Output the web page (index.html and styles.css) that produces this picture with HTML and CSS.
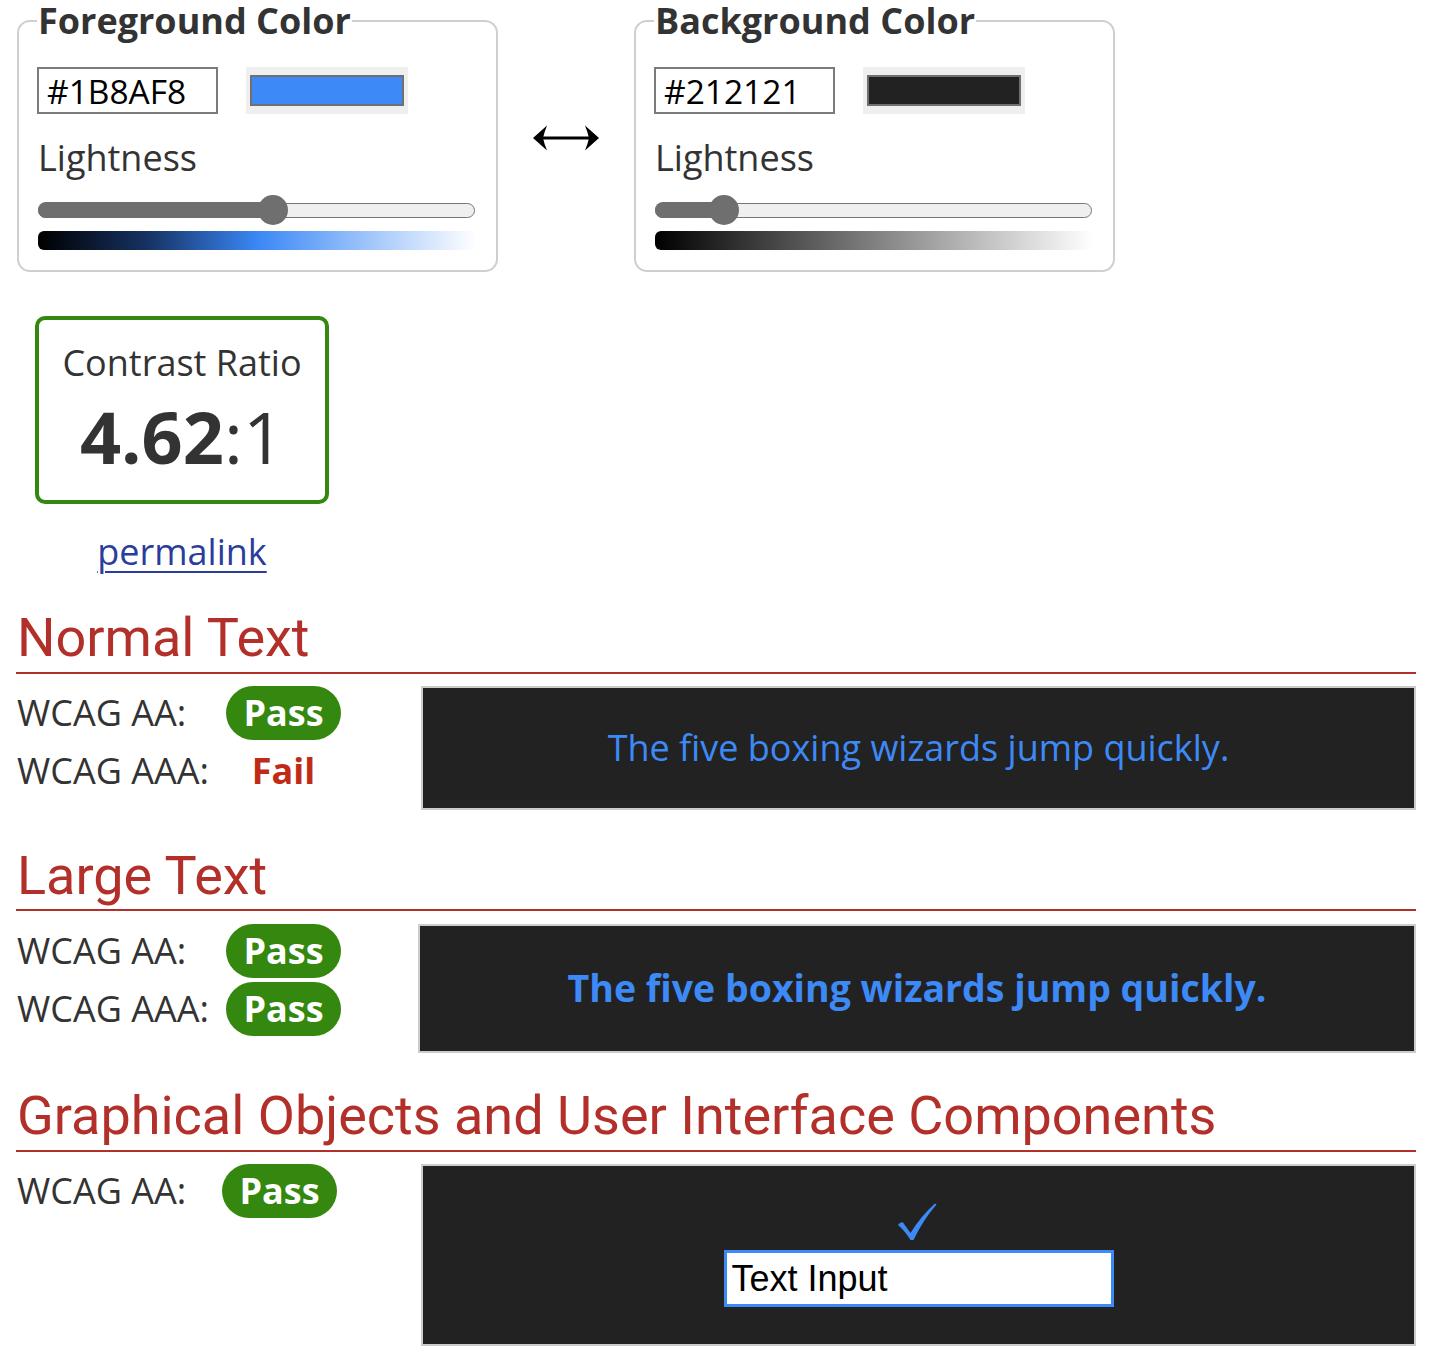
FILE: index.html
```html
<!DOCTYPE html>
<html lang="en">
<head>
<meta charset="utf-8">
<title>Contrast Checker</title>
<link rel="stylesheet" href="styles.css">
</head>
<body>
<div class="page">
  <div class="pickers">
    <fieldset class="picker">
      <legend>Foreground Color</legend>
      <div class="pick-row">
        <input class="hex" type="text" value="#1B8AF8" aria-label="Foreground hex">
        <div class="swatch"><div class="swatch-fill fg-fill"></div></div>
      </div>
      <div class="label">Lightness</div>
      <div class="slider">
        <div class="track">
          <div class="fill" style="width:53.8%"></div>
          <div class="thumb" style="left:53.8%"></div>
        </div>
      </div>
      <div class="grad fg-grad"></div>
    </fieldset>

    <div class="swap" aria-label="swap colors">
      <svg width="68" height="28" viewBox="0 0 68 28">
        <line x1="8" y1="14" x2="60" y2="14" stroke="#000" stroke-width="3.2"/>
        <path d="M1 14 L15 1.5 Q12 9 11 14 Q12 19 15 26.5 Z" fill="#000"/>
        <path d="M67 14 L53 1.5 Q56 9 57 14 Q56 19 53 26.5 Z" fill="#000"/>
      </svg>
    </div>

    <fieldset class="picker">
      <legend>Background Color</legend>
      <div class="pick-row">
        <input class="hex" type="text" value="#212121" aria-label="Background hex">
        <div class="swatch"><div class="swatch-fill bg-fill"></div></div>
      </div>
      <div class="label">Lightness</div>
      <div class="slider">
        <div class="track">
          <div class="fill" style="width:15.6%"></div>
          <div class="thumb" style="left:15.6%"></div>
        </div>
      </div>
      <div class="grad bg-grad"></div>
    </fieldset>
  </div>

  <div class="ratio-wrap">
    <div class="ratio-box">
      <div class="ratio-label">Contrast Ratio</div>
      <div class="ratio-value"><b>4.62</b>:1</div>
    </div>
    <a class="permalink" href="#">permalink</a>
  </div>

  <section class="result first">
    <h2 class="sec-title">Normal Text</h2>
    <div class="sec-body">
      <div class="checks">
        <div class="chk-label">WCAG AA:</div><div class="chk-res"><span class="pass">Pass</span></div>
        <div class="chk-label">WCAG AAA:</div><div class="chk-res"><span class="fail">Fail</span></div>
      </div>
      <div class="sample sample-normal">The five boxing wizards jump quickly.</div>
    </div>
  </section>

  <section class="result second">
    <h2 class="sec-title">Large Text</h2>
    <div class="sec-body large-body">
      <div class="checks">
        <div class="chk-label">WCAG AA:</div><div class="chk-res"><span class="pass">Pass</span></div>
        <div class="chk-label">WCAG AAA:</div><div class="chk-res"><span class="pass">Pass</span></div>
      </div>
      <div class="sample sample-large">The five boxing wizards jump quickly.</div>
    </div>
  </section>

  <section class="result graphical">
    <h2 class="sec-title">Graphical Objects and User Interface Components</h2>
    <div class="sec-body">
      <div class="checks checks-single">
        <div class="chk-label">WCAG AA:</div><div class="chk-res"><span class="pass">Pass</span></div>
      </div>
      <div class="sample sample-ui">
        <svg class="tick" width="40" height="38" viewBox="0 0 40 38">
          <path d="M1 22 Q3.5 18.5 6 19.5 L13.5 30 Q24 13 38 0.5 L39.5 1.5 Q26 17 16.5 37 L13.5 37 Q8 28 1 22 Z" fill="#3d8af7"/>
        </svg>
        <div class="ui-input">Text Input</div>
      </div>
    </div>
  </section>
</div>
</body>
</html>
```

FILE: styles.css
```css
html, body {
  margin: 0;
  padding: 0;
  background: #fff;
}

body {
  font-family: "Open Sans", "Noto Sans", sans-serif;
  font-size: 36px;
  color: #333;
}

.page {
  width: 1400px;
  margin-left: 16px;
  padding-bottom: 20px;
}

/* ---------- colour pickers ---------- */
.pickers {
  display: flex;
  align-items: center;
  gap: 34px;
  padding-left: 1px;
}

.picker {
  box-sizing: border-box;
  width: 481px;
  margin: 0;
  padding: 25px 20px 20px 19px;
  border: 2px solid #cfcfcf;
  border-radius: 13px;
  min-inline-size: 0;
}

.picker legend {
  padding: 0 1px;
  margin-left: -1px;
  font-size: 36px;
  font-weight: 700;
  line-height: 42px;
  color: #333;
}

.pick-row {
  display: flex;
  align-items: center;
  gap: 28px;
  height: 47px;
}

.hex {
  box-sizing: border-box;
  width: 181px;
  height: 47px;
  margin: 0 0 0 -1px;
  padding: 0 0 0 8px;
  border: 2px solid #7b7b7b;
  border-radius: 0;
  font-family: "Open Sans", "Noto Sans", sans-serif;
  font-size: 33.5px;
  color: #000;
  background: #fff;
  outline: none;
}

.swatch {
  box-sizing: border-box;
  width: 162px;
  height: 47px;
  padding: 8px 4px;
  background: #efefef;
}

.swatch-fill {
  box-sizing: border-box;
  width: 100%;
  height: 100%;
  border: 2px solid #707070;
}

.fg-fill { background: #3d8af7; }
.bg-fill { background: #222222; }

.label {
  margin-top: 21px;
  font-size: 36px;
  line-height: 46px;
  color: #333;
}

.slider {
  margin-top: 14px;
  height: 30px;
  display: flex;
  align-items: center;
}

.track {
  position: relative;
  box-sizing: border-box;
  width: 437px;
  height: 15px;
  border: 1.5px solid #767676;
  border-radius: 8px;
  background: #efefef;
}

.fill {
  position: absolute;
  left: -1.5px;
  top: -1.5px;
  bottom: -1.5px;
  background: #6f6f6f;
  border-radius: 8px 0 0 8px;
}

.thumb {
  position: absolute;
  top: 50%;
  width: 30px;
  height: 30px;
  border-radius: 50%;
  background: #6f6f6f;
  transform: translate(-50%, -50%);
}

.grad {
  margin-top: 6px;
  width: 438px;
  height: 19px;
  border-radius: 6px 0 0 6px;
}

.fg-grad {
  background: linear-gradient(to right, #000 0%, #163263 25%, #3a87f5 50%, #9ec4fa 75%, #ffffff 100%);
}

.bg-grad {
  background: linear-gradient(to right, #000 0%, #404040 25%, #808080 50%, #c0c0c0 75%, #ffffff 100%);
}

.swap {
  width: 68px;
  height: 28px;
  margin-top: 4px;
  display: flex;
}

/* ---------- contrast ratio ---------- */
.ratio-wrap {
  width: 294px;
  margin: 44px 0 0 19px;
  text-align: center;
}

.ratio-box {
  box-sizing: border-box;
  height: 188px;
  padding-top: 20px;
  border: 4px solid #35880f;
  border-radius: 10px;
}

.ratio-label {
  font-size: 36px;
  line-height: 46px;
  color: #333;
}

.ratio-value {
  margin-top: 10px;
  font-size: 72px;
  line-height: 80px;
  color: #333;
}

.ratio-value b {
  font-weight: 700;
}

.permalink {
  display: block;
  margin-top: 25px;
  font-size: 36px;
  line-height: 46px;
  color: #2a3d9c;
  text-decoration: underline;
  text-decoration-thickness: 2px;
  text-underline-offset: 6px;
}

/* ---------- result sections ---------- */
.result {
  margin-top: 35px;
}

.result.first {
  margin-top: 33px;
}

.result.second {
  margin-top: 36px;
}

.result.graphical {
  margin-top: 33px;
}

.sec-title {
  margin: 0;
  padding: 0 0 3.5px 1px;
  font-family: Roboto, "Liberation Sans", sans-serif;
  font-weight: 400;
  font-size: 54px;
  line-height: 60px;
  color: #b3302a;
  border-bottom: 2px solid #b3302a;
}

.sec-body {
  display: flex;
  align-items: flex-start;
  margin-top: 12px;
}

.large-body {
  margin-top: 13px;
}

.checks {
  flex: none;
  width: 405px;
  display: grid;
  grid-template-columns: 210px 115px;
  grid-auto-rows: 54px;
  row-gap: 4px;
}

.checks-single {
  grid-template-columns: 206px 115px;
}

.chk-label {
  font-size: 36px;
  line-height: 54px;
  color: #333;
  padding-left: 1px;
  white-space: nowrap;
}

.chk-res {
  display: flex;
  justify-content: center;
  align-items: center;
  height: 54px;
}

.pass {
  display: block;
  width: 115px;
  height: 54px;
  border-radius: 27px;
  background: #35880f;
  color: #fff;
  font-weight: 700;
  font-size: 36px;
  line-height: 54px;
  text-align: center;
}

.fail {
  display: block;
  color: #c02b18;
  font-weight: 700;
  font-size: 36px;
  line-height: 54px;
}

.sample {
  flex: 1;
  box-sizing: border-box;
  border: 2px solid #cccccc;
  background: #222222;
  color: #3d8af7;
  text-align: center;
}

.sample-normal {
  padding: 37px 0;
  font-size: 36px;
  line-height: 46px;
}

.sample-large {
  padding: 37px 0 38px;
  font-size: 37.5px;
  font-weight: 700;
  line-height: 50px;
  margin-left: -3px;
}

.sample-ui {
  height: 182px;
  display: flex;
  flex-direction: column;
  align-items: center;
  justify-content: center;
  gap: 9px;
}

.tick {
  display: block;
  margin-left: -4px;
}

.ui-input {
  box-sizing: border-box;
  width: 390px;
  height: 57px;
  padding-left: 5px;
  border: 3px solid #3d8af7;
  background: #fff;
  color: #000;
  font-family: "Liberation Sans", Arial, sans-serif;
  font-size: 36px;
  line-height: 51px;
  text-align: left;
}
```
